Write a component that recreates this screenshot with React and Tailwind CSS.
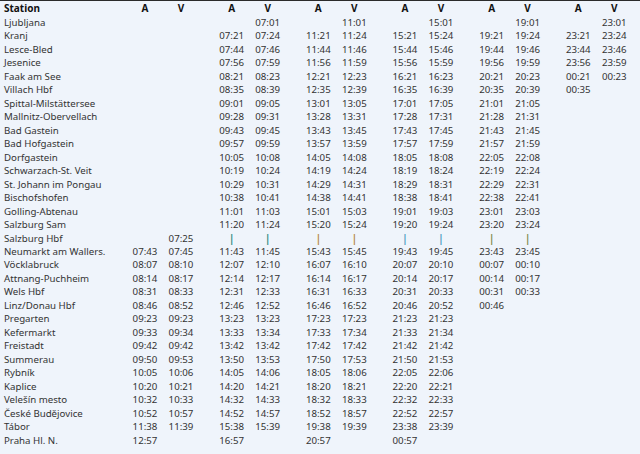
const rows = [
  ['Ljubljana', '', '', '', '07:01', '', '11:01', '', '15:01', '', '19:01', '', '23:01'],
  ['Kranj', '', '', '07:21', '07:24', '11:21', '11:24', '15:21', '15:24', '19:21', '19:24', '23:21', '23:24'],
  ['Lesce-Bled', '', '', '07:44', '07:46', '11:44', '11:46', '15:44', '15:46', '19:44', '19:46', '23:44', '23:46'],
  ['Jesenice', '', '', '07:56', '07:59', '11:56', '11:59', '15:56', '15:59', '19:56', '19:59', '23:56', '23:59'],
  ['Faak am See', '', '', '08:21', '08:23', '12:21', '12:23', '16:21', '16:23', '20:21', '20:23', '00:21', '00:23'],
  ['Villach Hbf', '', '', '08:35', '08:39', '12:35', '12:39', '16:35', '16:39', '20:35', '20:39', '00:35', ''],
  ['Spittal-Milstättersee', '', '', '09:01', '09:05', '13:01', '13:05', '17:01', '17:05', '21:01', '21:05', '', ''],
  ['Mallnitz-Obervellach', '', '', '09:28', '09:31', '13:28', '13:31', '17:28', '17:31', '21:28', '21:31', '', ''],
  ['Bad Gastein', '', '', '09:43', '09:45', '13:43', '13:45', '17:43', '17:45', '21:43', '21:45', '', ''],
  ['Bad Hofgastein', '', '', '09:57', '09:59', '13:57', '13:59', '17:57', '17:59', '21:57', '21:59', '', ''],
  ['Dorfgastein', '', '', '10:05', '10:08', '14:05', '14:08', '18:05', '18:08', '22:05', '22:08', '', ''],
  ['Schwarzach-St. Veit', '', '', '10:19', '10:24', '14:19', '14:24', '18:19', '18:24', '22:19', '22:24', '', ''],
  ['St. Johann im Pongau', '', '', '10:29', '10:31', '14:29', '14:31', '18:29', '18:31', '22:29', '22:31', '', ''],
  ['Bischofshofen', '', '', '10:38', '10:41', '14:38', '14:41', '18:38', '18:41', '22:38', '22:41', '', ''],
  ['Golling-Abtenau', '', '', '11:01', '11:03', '15:01', '15:03', '19:01', '19:03', '23:01', '23:03', '', ''],
  ['Salzburg Sam', '', '', '11:20', '11:24', '15:20', '15:24', '19:20', '19:24', '23:20', '23:24', '', ''],
  ['Salzburg Hbf', '', '07:25', '|', '|', '|', '|', '|', '|', '|', '|', '', ''],
  ['Neumarkt am Wallers.', '07:43', '07:45', '11:43', '11:45', '15:43', '15:45', '19:43', '19:45', '23:43', '23:45', '', ''],
  ['Vöcklabruck', '08:07', '08:10', '12:07', '12:10', '16:07', '16:10', '20:07', '20:10', '00:07', '00:10', '', ''],
  ['Attnang-Puchheim', '08:14', '08:17', '12:14', '12:17', '16:14', '16:17', '20:14', '20:17', '00:14', '00:17', '', ''],
  ['Wels Hbf', '08:31', '08:33', '12:31', '12:33', '16:31', '16:33', '20:31', '20:33', '00:31', '00:33', '', ''],
  ['Linz/Donau Hbf', '08:46', '08:52', '12:46', '12:52', '16:46', '16:52', '20:46', '20:52', '00:46', '', '', ''],
  ['Pregarten', '09:23', '09:23', '13:23', '13:23', '17:23', '17:23', '21:23', '21:23', '', '', '', ''],
  ['Kefermarkt', '09:33', '09:34', '13:33', '13:34', '17:33', '17:34', '21:33', '21:34', '', '', '', ''],
  ['Freistadt', '09:42', '09:42', '13:42', '13:42', '17:42', '17:42', '21:42', '21:42', '', '', '', ''],
  ['Summerau', '09:50', '09:53', '13:50', '13:53', '17:50', '17:53', '21:50', '21:53', '', '', '', ''],
  ['Rybník', '10:05', '10:06', '14:05', '14:06', '18:05', '18:06', '22:05', '22:06', '', '', '', ''],
  ['Kaplice', '10:20', '10:21', '14:20', '14:21', '18:20', '18:21', '22:20', '22:21', '', '', '', ''],
  ['Velešín mesto', '10:32', '10:33', '14:32', '14:33', '18:32', '18:33', '22:32', '22:33', '', '', '', ''],
  ['České Budějovice', '10:52', '10:57', '14:52', '14:57', '18:52', '18:57', '22:52', '22:57', '', '', '', ''],
  ['Tábor', '11:38', '11:39', '15:38', '15:39', '19:38', '19:39', '23:38', '23:39', '', '', '', ''],
  ['Praha Hl. N.', '12:57', '', '16:57', '', '20:57', '', '00:57', '', '', '', '', ''],
];

const rowGrid = 'grid grid-cols-[112.33px_repeat(6,72px)] gap-x-[14.67px]';

// the "|" through-train marks, in the order they show up in the Salzburg Hbf row
const pipeColors = ['text-[#2f8a80]', 'text-[#2f8a80]', 'text-[#b5893a]', 'text-[#b5893a]', 'text-[#4a9ac0]', 'text-[#4a9ac0]', 'text-[#7d8a4a]', 'text-[#7d8a4a]'];

function Pair({ a, v, pipes }) {
  return (
    <div className="grid grid-cols-2 text-center">
      <div className={a === '|' ? `font-bold ${pipes[0]}` : ''}>{a}</div>
      <div className={v === '|' ? `font-bold ${pipes[1]}` : ''}>{v}</div>
    </div>
  );
}

export default function App() {
  return (
    <div className="h-[454px] w-[640px] overflow-hidden border-t border-[#2b2b2b] bg-[#eff4fb] font-['Noto_Sans',sans-serif] text-[9.7px] text-[#333]">
      <div className={`${rowGrid} h-[15px] items-center text-[10px] font-bold text-[#111]`}>
        <div className="pl-1">Station</div>
        {[0, 1, 2, 3, 4, 5].map((g) => (
          <Pair key={g} a="A" v="V" pipes={[]} />
        ))}
      </div>
      {rows.map((r) => (
        <div key={r[0]} className={`${rowGrid} h-[13.47px] leading-[13.47px]`}>
          <div className="whitespace-nowrap pl-1">{r[0]}</div>
          {[0, 1, 2, 3, 4, 5].map((g) => (
            <Pair
              key={g}
              a={r[g * 2 + 1]}
              v={r[g * 2 + 2]}
              pipes={[pipeColors[(g - 1) * 2], pipeColors[(g - 1) * 2 + 1]]}
            />
          ))}
        </div>
      ))}
    </div>
  );
}
